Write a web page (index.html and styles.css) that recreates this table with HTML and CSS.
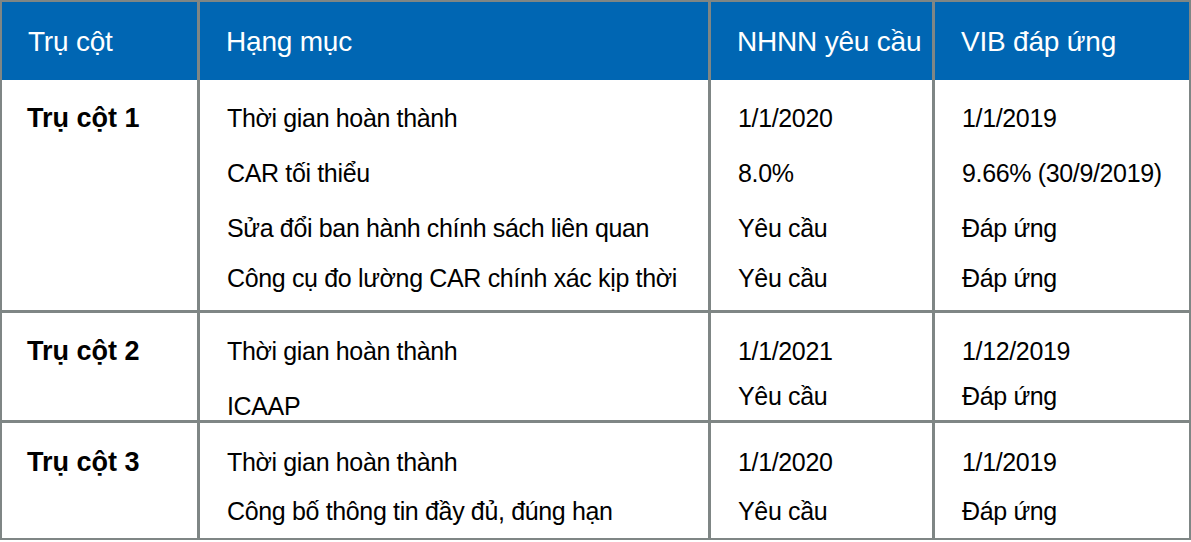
FILE: index.html
```html
<!DOCTYPE html>
<html lang="vi">
<head>
<meta charset="utf-8">
<title>Trụ cột</title>
<link rel="stylesheet" href="styles.css">
</head>
<body>
<div class="table">
  <div class="head">
    <div class="hc hc-first">Trụ cột</div>
    <div class="hc">Hạng mục</div>
    <div class="hc">NHNN yêu cầu</div>
    <div class="hc">VIB đáp ứng</div>
  </div>

  <div class="row row-1">
    <div class="cell cell-first"><div class="ln pillar">Trụ cột 1</div></div>
    <div class="cell">
      <div class="ln">Thời gian hoàn thành</div>
      <div class="ln">CAR tối thiểu</div>
      <div class="ln">Sửa đổi ban hành chính sách liên quan</div>
      <div class="ln up5">Công cụ đo lường CAR chính xác kịp thời</div>
    </div>
    <div class="cell">
      <div class="ln">1/1/2020</div>
      <div class="ln">8.0%</div>
      <div class="ln">Yêu cầu</div>
      <div class="ln up5">Yêu cầu</div>
    </div>
    <div class="cell">
      <div class="ln">1/1/2019</div>
      <div class="ln">9.66% (30/9/2019)</div>
      <div class="ln">Đáp ứng</div>
      <div class="ln up5">Đáp ứng</div>
    </div>
  </div>

  <div class="row row-2">
    <div class="cell cell-first"><div class="ln pillar">Trụ cột 2</div></div>
    <div class="cell">
      <div class="ln">Thời gian hoàn thành</div>
      <div class="ln">ICAAP</div>
    </div>
    <div class="cell">
      <div class="ln">1/1/2021</div>
      <div class="ln up10">Yêu cầu</div>
    </div>
    <div class="cell">
      <div class="ln">1/12/2019</div>
      <div class="ln up10">Đáp ứng</div>
    </div>
  </div>

  <div class="row row-3">
    <div class="cell cell-first"><div class="ln pillar">Trụ cột 3</div></div>
    <div class="cell">
      <div class="ln">Thời gian hoàn thành</div>
      <div class="ln up6">Công bố thông tin đầy đủ, đúng hạn</div>
    </div>
    <div class="cell">
      <div class="ln">1/1/2020</div>
      <div class="ln up6">Yêu cầu</div>
    </div>
    <div class="cell">
      <div class="ln">1/1/2019</div>
      <div class="ln up6">Đáp ứng</div>
    </div>
  </div>
</div>
</body>
</html>
```

FILE: styles.css
```css
html, body {
  margin: 0;
  padding: 0;
  background: #ffffff;
}

body {
  font-family: "Liberation Sans", Arial, sans-serif;
  color: #000000;
}

.table {
  width: 1191px;
  box-sizing: border-box;
  background: #7f8685;
  padding: 2px;
  display: flex;
  flex-direction: column;
  gap: 3px;
}

.head,
.row {
  display: grid;
  grid-template-columns: 195px 508px 221px 254px;
  grid-template-rows: 100%;
  column-gap: 3px;
  flex: none;
}

.head {
  height: 78px;
  margin-bottom: -3px;
}

.hc {
  background: #0066b3;
  color: #ffffff;
  font-size: 28px;
  line-height: 76px;
  padding: 2px 0 0 26px;
  white-space: nowrap;
  letter-spacing: -0.2px;
}

.row-1 { height: 230px; }
.row-2 { height: 107px; }
.row-3 { height: 115px; }

.cell {
  background: #ffffff;
  padding: 11px 0 0 27px;
  font-size: 25px;
  white-space: nowrap;
  letter-spacing: -0.35px;
  overflow: hidden;
  min-height: 0;
}

.row-3 .cell { padding-top: 12px; }

.cell-first { padding-left: 25px; }

.ln {
  line-height: 55px;
  height: 55px;
}

.pillar {
  font-weight: bold;
  font-size: 27px;
  letter-spacing: 0;
}

.up5 { margin-top: -5px; }
.up6 { margin-top: -6px; }
.up10 { margin-top: -10px; }
```
